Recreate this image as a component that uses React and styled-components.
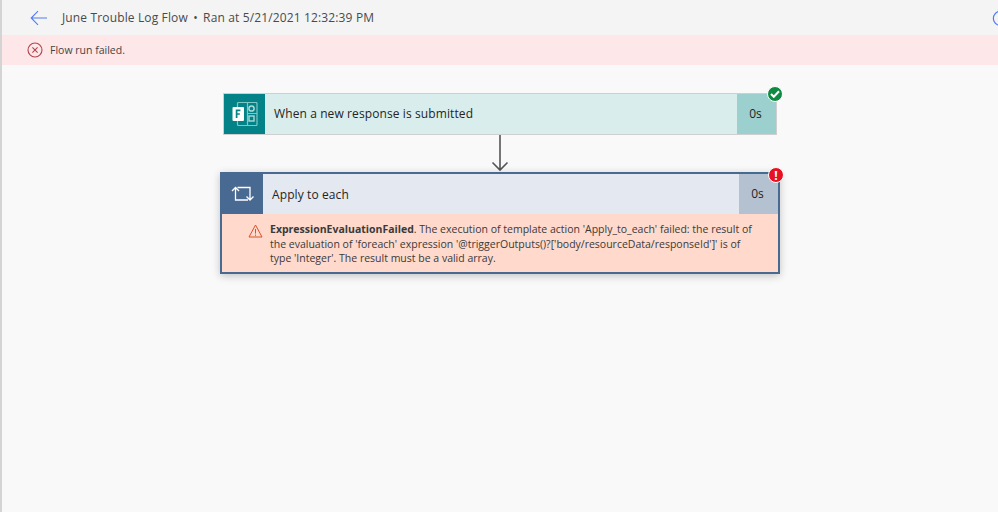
import React from 'react';
import styled, { createGlobalStyle } from 'styled-components';

const GlobalStyle = createGlobalStyle`
  html, body { margin: 0; padding: 0; height: 100%; }
  body { font-family: "Open Sans", "Noto Sans", "Liberation Sans", sans-serif; overflow: hidden; }
  #root { height: 100%; }
`;

const BackIcon = () => (
  <svg width="18" height="16" viewBox="0 0 18 16" fill="none" stroke="#4f7cf0" strokeWidth="1.1">
    <path d="M17 8H1.5M8 1.2 1.2 8 8 14.8" />
  </svg>
);

const RefreshIcon = () => (
  <svg width="16" height="18" viewBox="0 0 16 18" fill="none" stroke="#4f7cf0" strokeWidth="1.2">
    <path d="M6 2.6A7.2 7.2 0 1 0 15 6" />
    <path d="M6 .5l3 2.4L6.5 6" />
  </svg>
);

const FailedIcon = () => (
  <svg width="16" height="16" viewBox="0 0 16 16" fill="none" stroke="#b3434b" strokeWidth="1.1">
    <circle cx="8" cy="8" r="7" />
    <path d="M5.4 5.4l5.2 5.2M10.6 5.4l-5.2 5.2" />
  </svg>
);

const FormsIcon = () => (
  <svg width="26" height="24" viewBox="0 0 26 24" fill="none">
    <rect x="5.5" y="0.5" width="19.5" height="23" rx="1" stroke="#7fc6c6" strokeWidth="1.2" />
    <path d="M15.5 .5v23M15.5 11.5h9.5" stroke="#7fc6c6" strokeWidth="1.2" />
    <circle cx="19.5" cy="6.5" r="2.6" stroke="#a9dada" strokeWidth="1.5" />
    <rect x="17" y="14" width="5" height="5" stroke="#a9dada" strokeWidth="1.4" />
    <rect x="0.5" y="5" width="11.5" height="14" rx="1" fill="#fff" />
    <path d="M4.6 16V8.4h3.8M4.6 12h3.2" stroke="#038387" strokeWidth="1.7" />
  </svg>
);

const LoopIcon = () => (
  <svg width="23" height="16" viewBox="0 0 23 16" fill="none" stroke="#fff" strokeWidth="1.3">
    <path d="M1 5 4.5 1.5 8 5M4.5 2V14H17" />
    <path d="M22.5 10.5 19 14l-3.5-3.5M19 13.5V1.5H6.5" />
  </svg>
);

const WarningIcon = () => (
  <svg width="15" height="14" viewBox="0 0 15 14" fill="none" stroke="#d9502f" strokeWidth="1">
    <path d="M7.5 1 14 13H1Z" />
    <path d="M7.5 5v4.6M7.5 10.6v1.2" />
  </svg>
);

const CheckGlyph = () => (
  <svg width="10" height="8" viewBox="0 0 10 8" fill="none" stroke="#fff" strokeWidth="2">
    <path d="M1 4l2.8 2.8L9 1.2" />
  </svg>
);

const App = () => (
  <>
    <GlobalStyle />
    <Page>
      <Header>
        <BackButton><BackIcon /></BackButton>
        <Title>June Trouble Log Flow <Dot>•</Dot> Ran at 5/21/2021 12:32:39 PM</Title>
        <RefreshButton><RefreshIcon /></RefreshButton>
      </Header>
      <Banner>
        <FailedIcon />
        <BannerText>Flow run failed.</BannerText>
      </Banner>
      <Canvas>
        <TriggerCard>
          <CardRow>
            <IconTile $bg="#038387"><FormsIcon /></IconTile>
            <CardTitle $bg="#d9eeec" $lift={2}>When a new response is submitted</CardTitle>
            <Duration $bg="#9bd0ce">0s</Duration>
          </CardRow>
          <StatusBadge $bg="#0f8a43" $right={-7} $top={-8}><CheckGlyph /></StatusBadge>
        </TriggerCard>
        <Connector>
          <svg width="18" height="37" viewBox="0 0 18 37" fill="none" stroke="#555" strokeWidth="1.6">
            <path d="M9 0v35M1.5 27.5 9 35l7.5-7.5" />
          </svg>
        </Connector>
        <LoopCard>
          <CardRow>
            <IconTile $bg="#486991"><LoopIcon /></IconTile>
            <CardTitle $bg="#e4e8f0">Apply to each</CardTitle>
            <Duration $bg="#b4c1d1">0s</Duration>
          </CardRow>
          <ErrorBody>
            <WarningSlot><WarningIcon /></WarningSlot>
            <ErrorText>
              <strong>ExpressionEvaluationFailed</strong>. The execution of template action 'Apply_to_each' failed: the result of
              the evaluation of 'foreach' expression '@triggerOutputs()?['body/resourceData/responseId']' is of
              type 'Integer'. The result must be a valid array.
            </ErrorText>
          </ErrorBody>
          <StatusBadge $bg="#e81123" $right={-6} $top={-7}>!</StatusBadge>
        </LoopCard>
      </Canvas>
    </Page>
  </>
);

export default App;

const Page = styled.div`
  height: 512px;
  width: 998px;
  display: flex;
  flex-direction: column;
  background: #f9f9f9;
  border-left: 2px solid #d4d4d4;
  box-sizing: border-box;
  overflow: hidden;
  color: #323130;
`;

const Header = styled.header`
  height: 35px;
  flex: none;
  display: flex;
  align-items: center;
  background: #f4f4f4;
`;

const BackButton = styled.div`
  display: flex;
  margin-left: 28px;
`;

const Title = styled.div`
  margin-left: 14px;
  font-size: 12px;
  letter-spacing: 0.14px;
  color: #4a4a4a;
  white-space: nowrap;
`;

const Dot = styled.span`
  margin: 0 2px;
`;

const RefreshButton = styled.div`
  display: flex;
  margin-left: auto;
  margin-right: -10px;
`;

const Banner = styled.div`
  height: 30px;
  flex: none;
  display: flex;
  align-items: center;
  padding-left: 25px;
  background: #fde7e9;
`;

const BannerText = styled.span`
  margin-left: 7px;
  font-size: 10.5px;
  color: #444;
`;

const Canvas = styled.main`
  flex: 1;
  display: flex;
  flex-direction: column;
  align-items: center;
  padding-top: 28px;
`;

const TriggerCard = styled.section`
  position: relative;
  width: 554px;
  box-sizing: border-box;
  border: 1px solid #cfcfcf;
`;

const LoopCard = styled.section`
  position: relative;
  width: 560px;
  box-sizing: border-box;
  border: 2px solid #486991;
  box-shadow: 0 2px 8px rgba(0, 0, 0, 0.22);
`;

const CardRow = styled.div`
  display: flex;
  height: 40px;
`;

const IconTile = styled.div`
  width: 41px;
  flex: none;
  display: flex;
  align-items: center;
  justify-content: center;
  background: ${p => p.$bg};
`;

const CardTitle = styled.div`
  flex: 1;
  display: flex;
  align-items: center;
  padding: 0 0 ${p => p.$lift || 0}px 9px;
  font-size: 12px;
  letter-spacing: 0.1px;
  color: #252423;
  background: ${p => p.$bg};
`;

const Duration = styled.div`
  width: 39px;
  box-sizing: border-box;
  flex: none;
  display: flex;
  align-items: center;
  justify-content: center;
  padding: 0 2px 1px 0;
  font-size: 12px;
  color: #252423;
  background: ${p => p.$bg};
`;

const StatusBadge = styled.div`
  position: absolute;
  right: ${p => p.$right}px;
  top: ${p => p.$top}px;
  width: 14px;
  height: 14px;
  border-radius: 50%;
  border: 1px solid #fff;
  background: ${p => p.$bg};
  color: #fff;
  font-size: 12px;
  font-weight: 700;
  display: flex;
  align-items: center;
  justify-content: center;
`;

const Connector = styled.div`
  height: 37px;
  display: flex;
  justify-content: center;
`;

const ErrorBody = styled.div`
  display: flex;
  height: 58px;
  background: #fed9cc;
`;

const WarningSlot = styled.div`
  flex: none;
  padding: 7px 0 0 26px;
`;

const ErrorText = styled.p`
  margin: 0;
  padding: 8px 0 0 7px;
  width: 484px;
  font-size: 10.5px;
  line-height: 14.5px;
  color: #3a3a3a;

  strong { font-weight: 700; }
`;
